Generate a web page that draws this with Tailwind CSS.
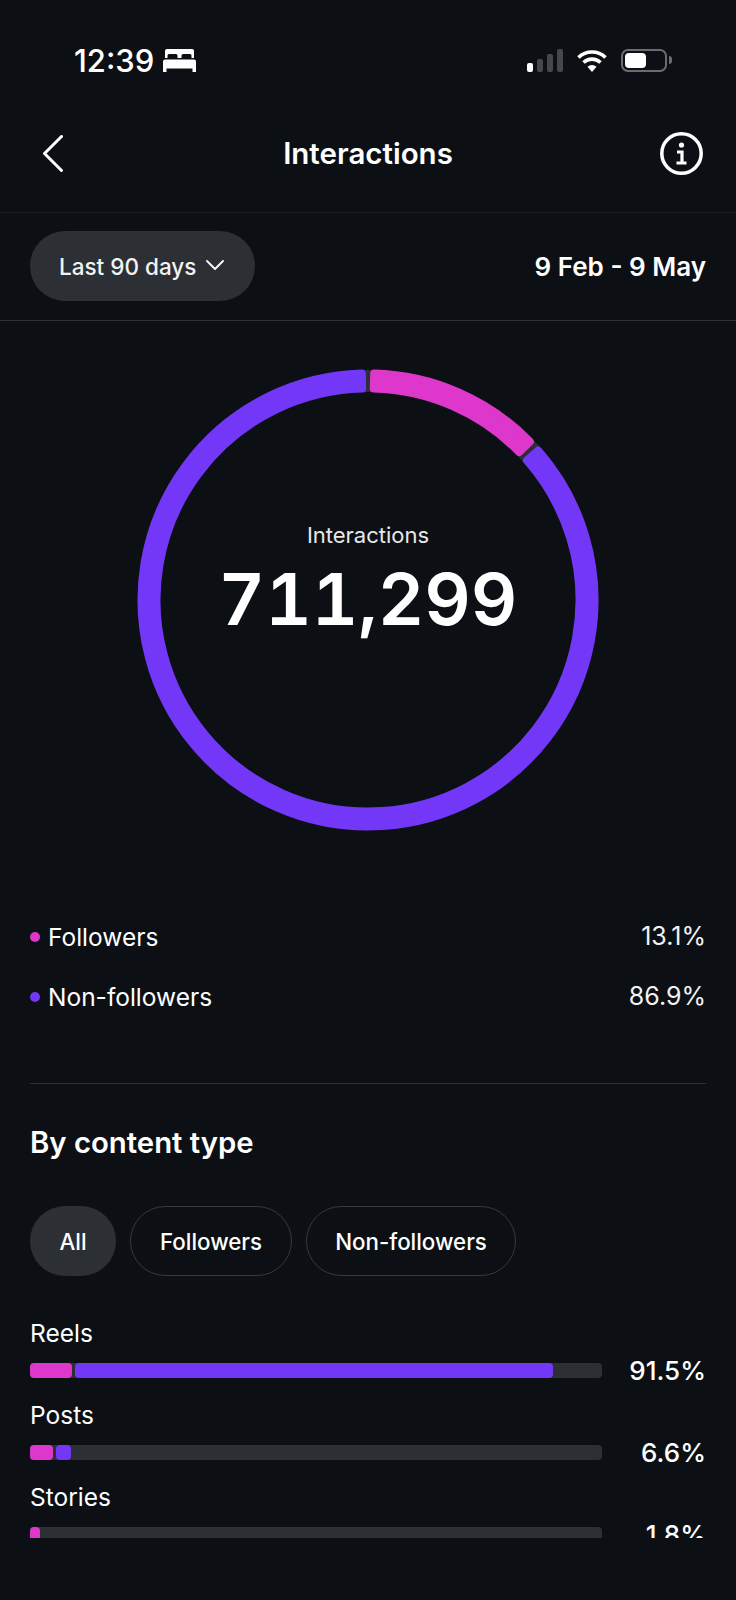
<!DOCTYPE html>
<html lang="en">

<head>
  <meta charset="UTF-8" />
  <meta name="viewport" content="width=device-width, initial-scale=1.0" />
  <script src="https://cdn.jsdelivr.net/npm/@tailwindcss/browser@4"></script>
  <title>Interactions</title>
</head>

<body class="bg-[#0c1014] min-h-screen text-white font-['Inter',sans-serif]">
  <div class="w-[736px] h-[1538px] overflow-hidden">
    <!-- Status bar -->
    <div class="h-[100px] pt-[20px] pl-[74px] pr-[64px] flex items-center justify-between">
      <div class="flex items-center gap-[9px]">
        <span class="text-[31px] leading-none font-medium">12:39</span>
        <svg width="33" height="23" viewBox="0 0 33 23" fill="#fff">
          <path d="M4 0h25a2 2 0 0 1 2 2v7h-2.500V6.500a1.500 1.500 0 0 0-1.500-1.500h-7a1.500 1.500 0 0 0-1.500 1.500V9h-4V6.500A1.500 1.500 0 0 0 13 5H6a1.500 1.500 0 0 0-1.500 1.500V9H2V2a2 2 0 0 1 2-2z" />
          <path d="M2 10.500h29a2 2 0 0 1 2 2V23h-3.500v-3.500h-26V23H0V12.500a2 2 0 0 1 2-2z" />
        </svg>
      </div>
      <div class="flex items-center gap-[14px]">
        <div class="flex items-end gap-[4px] h-[23px]">
          <div class="w-[6px] h-[9px] rounded-[2px] bg-white"></div>
          <div class="w-[6px] h-[13px] rounded-[2px] bg-[#45484b]"></div>
          <div class="w-[6px] h-[18px] rounded-[2px] bg-[#45484b]"></div>
          <div class="w-[6px] h-[23px] rounded-[2px] bg-[#45484b]"></div>
        </div>
        <svg width="30" height="23" viewBox="0 0 30 23" fill="none" stroke="#fff" stroke-width="3.600">
          <path d="M1.500 8.500a19.500 19.500 0 0 1 27 0" />
          <path d="M6.500 13.500a12.500 12.500 0 0 1 17 0" />
          <path d="M15 23l-4.500-5.200a6.500 6.500 0 0 1 9 0z" fill="#fff" stroke="none" />
        </svg>
        <div class="flex items-center gap-[2px]">
          <div class="w-[46px] h-[23px] rounded-[7px] border-2 border-[#6a6d70] p-[2px]">
            <div class="w-[21px] h-full rounded-[4px] bg-white"></div>
          </div>
          <div class="w-[3px] h-[8px] rounded-r-full bg-[#6a6d70]"></div>
        </div>
      </div>
    </div>

    <!-- Nav -->
    <div class="h-[113px] pb-[5px] px-[33px] flex items-center border-b border-[#1b1f23]">
      <div class="flex-1">
        <svg class="ml-[10px]" width="20" height="37" viewBox="0 0 20 37" fill="none" stroke="#fff" stroke-width="3" stroke-linecap="round" stroke-linejoin="round">
          <path d="M18.500 1.500L1.500 18.500l17 17" />
        </svg>
      </div>
      <h1 class="text-[29.500px] font-semibold">Interactions</h1>
      <div class="flex-1 flex justify-end">
        <svg width="43" height="43" viewBox="0 0 43 43" fill="none" stroke="#fff">
          <circle cx="21.500" cy="21.500" r="19.700" stroke-width="3.500" />
          <circle cx="21.500" cy="13" r="2.600" fill="#fff" stroke="none" />
          <path d="M17 20h5v11M16.500 31h10" stroke-width="3.200" />
        </svg>
      </div>
    </div>

    <!-- Date filter -->
    <div class="h-[108px] pb-[2px] px-[30px] flex items-center justify-between border-b border-[#2c3035]">
      <div class="h-[70px] w-[225px] pl-[29px] rounded-full bg-[#2c3035] flex items-center gap-[10px]">
        <span class="pt-[2px] text-[22.500px] font-medium text-[#f2f2f2]">Last 90 days</span>
        <svg width="18" height="11" viewBox="0 0 18 11" fill="none" stroke="#fff" stroke-width="1.800" stroke-linecap="round" stroke-linejoin="round">
          <path d="M1 1l8 8 8-8" />
        </svg>
      </div>
      <span class="pt-[2px] text-[26px] font-semibold">9 Feb - 9 May</span>
    </div>

    <!-- Donut -->
    <div class="mt-[48px] relative w-[462px] h-[462px] mx-auto">
      <svg width="462" height="462" viewBox="0 0 462 462">
        <circle cx="231" cy="231" r="219" fill="none" stroke="#2c3035" stroke-width="22" />
        <path fill="#dd37cc" stroke="#dd37cc" stroke-width="8" stroke-linejoin="round" d="M237.21 4.59A226.5 226.5 0 0 1 392.83 72.53L382.11 83.02A211.5 211.5 0 0 0 236.8 19.58Z" />
        <path fill="#7337f8" stroke="#7337f8" stroke-width="8" stroke-linejoin="round" d="M401.23 81.59A226.5 226.5 0 1 1 224.79 4.59L225.2 19.58A211.5 211.5 0 1 0 389.95 91.48Z" />
      </svg>
      <div class="absolute inset-0 flex flex-col items-center pt-[151px]">
        <span class="text-[22px] leading-[30px] text-[#e8e8e8]">Interactions</span>
        <span class="text-[72px] leading-[98px] font-semibold tabular-nums">711,299</span>
      </div>
    </div>

    <!-- Legend -->
    <div class="mt-[76px] px-[30px] text-[24.500px]">
      <div class="h-[60px] flex items-center justify-between">
        <div class="flex items-center gap-[8px]">
          <div class="w-[10px] h-[10px] rounded-full bg-[#dd37cc]"></div>
          <span>Followers</span>
        </div>
        <span class="text-[25px] text-[#f2f2f2]">13.1%</span>
      </div>
      <div class="h-[60px] flex items-center justify-between">
        <div class="flex items-center gap-[8px]">
          <div class="w-[10px] h-[10px] rounded-full bg-[#7337f8]"></div>
          <span>Non-followers</span>
        </div>
        <span class="text-[25px] text-[#f2f2f2]">86.9%</span>
      </div>
    </div>

    <!-- By content type -->
    <div class="mt-[56px] mx-[30px] border-t border-[#2c3035]">
      <h2 class="mt-[40px] h-[40px] leading-[38px] text-[29.300px] font-semibold">By content type</h2>

      <div class="mt-[42px] flex gap-[14px] text-[22.300px] font-medium">
        <div class="h-[70px] w-[86px] pt-[1px] rounded-full bg-[#2c3035] flex items-center justify-center">All</div>
        <div class="h-[70px] w-[162px] pt-[1px] rounded-full border border-[#363a3e] flex items-center justify-center">Followers</div>
        <div class="h-[70px] w-[210px] pt-[1px] rounded-full border border-[#363a3e] flex items-center justify-center">Non-followers</div>
      </div>

      <div class="mt-[41px] flex flex-col gap-[14px]">
        <div>
          <div class="h-[30px] leading-[32px] text-[24.500px]">Reels</div>
          <div class="mt-[8px] h-[30px] flex items-center justify-between">
            <div class="w-[572px] h-[15px] rounded-[4px] bg-[#2c3035] flex gap-[3px]">
              <div class="w-[42px] rounded-[4px] bg-[#dd37cc]"></div>
              <div class="w-[478px] rounded-[4px] bg-[#7337f8]"></div>
            </div>
            <span class="pt-[1px] text-[26px] font-medium">91.5%</span>
          </div>
        </div>
        <div>
          <div class="h-[30px] leading-[32px] text-[24.500px]">Posts</div>
          <div class="mt-[8px] h-[30px] flex items-center justify-between">
            <div class="w-[572px] h-[15px] rounded-[4px] bg-[#2c3035] flex gap-[3px]">
              <div class="w-[23px] rounded-[4px] bg-[#dd37cc]"></div>
              <div class="w-[15px] rounded-[4px] bg-[#7337f8]"></div>
            </div>
            <span class="pt-[1px] text-[26px] font-medium">6.6%</span>
          </div>
        </div>
        <div>
          <div class="h-[30px] leading-[32px] text-[24.500px]">Stories</div>
          <div class="mt-[8px] h-[30px] flex items-center justify-between">
            <div class="w-[572px] h-[15px] rounded-[4px] bg-[#2c3035] flex gap-[3px]">
              <div class="w-[10px] rounded-[4px] bg-[#dd37cc]"></div>
            </div>
            <span class="pt-[1px] text-[26px] font-medium">1.8%</span>
          </div>
        </div>
      </div>
    </div>
  </div>
</body>

</html>
